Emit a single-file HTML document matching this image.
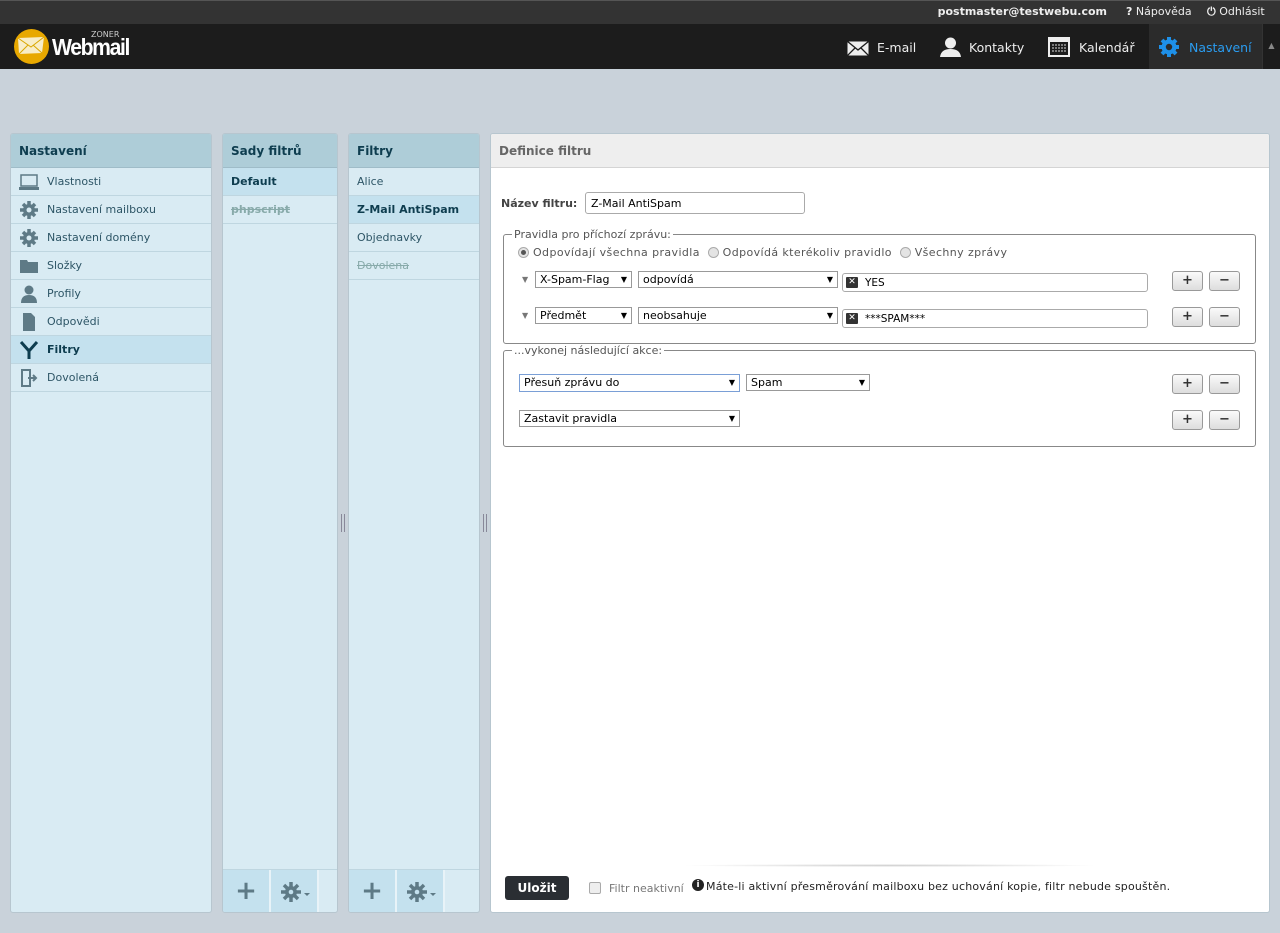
<!DOCTYPE html>
<html><head><meta charset="utf-8"><style>
*{box-sizing:border-box;margin:0;padding:0}
body{width:1280px;height:933px;background:#c9d2da;font-family:"DejaVu Sans","Liberation Sans",sans-serif;font-size:10.5px;color:#333;position:relative;overflow:hidden}
.a{position:absolute}
.top{left:0;top:0;width:1280px;height:24px;background:#333;border-top:1px solid #555}
.nav{left:0;top:24px;width:1280px;height:45px;background:#1c1c1c}
.navt{color:#eee;font-size:12.5px;top:40px}
.panel{background:#d9ebf3;border:1px solid #b7c6cf;border-radius:3px;top:133px;height:780px;overflow:hidden}
.ph{height:34px;background:#aecdd8;color:#0e3d4f;font-weight:bold;font-size:12px;padding:10px 8px;border-bottom:1px solid #9fbcc8}
.row{height:28px;border-bottom:1px solid #bfd6e0;padding:7px 0 0 8px;color:#2d5566;font-size:11px;position:relative}
.row.sel{background:#c4e1ee;font-weight:bold;color:#0e3d4f}
.row .ic{position:absolute;left:8px;top:5px;width:20px;height:18px}
.row.i{padding-left:36px}
.strike{text-decoration:line-through;color:#8aa;}
.foot{position:absolute;left:0;bottom:0;width:100%;height:43px;border-top:1px solid #bfd6e0}
.fb{position:absolute;top:0;height:43px;width:48px;background:#c4e1ee;border-right:2px solid #e8f3f8}
.sel2{border:1px solid #999;background:#fff;height:17px;font-size:11px;color:#000;padding:1px 4px;position:absolute}
.sel2:after{content:"▼";position:absolute;right:4px;top:3px;font-size:8px}
.btn{position:absolute;width:31px;height:20px;border:1px solid #999;border-radius:3px;background:linear-gradient(#fafafa,#ddd);text-align:center;font-weight:bold;font-size:13px;line-height:17px;color:#333}
fieldset{position:absolute;border:1px solid #888;border-radius:3px}
legend{font-size:11px;color:#555;margin-left:8px;padding:0 2px}
.txt{position:absolute;border:1px solid #aaa;border-radius:3px;background:#fff;height:19px;font-size:10.5px;padding:3px 0 0 22px;color:#000}
.xi{position:absolute;left:3px;top:3px;width:12px;height:11px;background:#333;border-radius:1px;color:#fff;font-size:9px;line-height:11px;text-align:center}
.radio{display:inline-block;width:11px;height:11px;border:1px solid #aaa;border-radius:50%;background:#e4e4e4;vertical-align:-2px;margin-right:4px;position:relative}
</style></head><body>
<div class="a top"></div>
<div class="a" style="right:173px;top:5px;color:#eee;font-weight:bold;font-size:11px">postmaster@testwebu.com</div>
<div class="a" style="left:1126px;top:5px;color:#eee;font-size:11px"><b>?</b> Nápověda</div>
<div class="a" style="left:1207px;top:5px;color:#eee;font-size:11px"><b>⏻</b> Odhlásit</div>
<div class="a nav"></div>
<div class="a" style="left:14px;top:29px;width:35px;height:35px;border-radius:50%;background:#e8a800"></div>
<svg class="a" style="left:16px;top:35px" width="32" height="22"><path d="M2 3L28 2L26 18L3 19Z" fill="#f8edc8"/><path d="M2 3L15 12L28 2M3 19L12 10M26 18L17 10" stroke="#d9a700" fill="none"/></svg>
<div class="a" style="left:91px;top:30px;color:#ccc;font-size:8px">ZONER</div>
<div class="a" style="left:52px;top:34px;color:#fff;font-size:23px;font-weight:bold;font-family:'Liberation Sans',sans-serif;letter-spacing:-1.5px;transform:scaleX(0.92);transform-origin:left">Webmail</div>
<svg class="a" style="left:847px;top:41px" width="22" height="15"><rect x="0.5" y="0.5" width="21" height="14" fill="#eee"/><path d="M0 0L11 9L22 0M0 15L8 7M22 15L14 7" stroke="#1c1c1c" fill="none" stroke-width="1.3"/></svg>
<div class="a navt" style="left:877px">E-mail</div>
<svg class="a" style="left:940px;top:36px" width="21" height="22"><circle cx="10.5" cy="7" r="5.5" fill="#eee"/><path d="M0 21Q1 13 10.5 13Q20 13 21 21Z" fill="#eee"/></svg>
<div class="a navt" style="left:969px">Kontakty</div>
<svg class="a" style="left:1048px;top:37px" width="22" height="20"><rect width="22" height="20" fill="#eee"/><rect x="2" y="5" width="18" height="13" fill="#1c1c1c"/><path d="M4 8h14M4 11h14M4 14h14" stroke="#ddd" stroke-dasharray="2 1"/></svg>
<div class="a navt" style="left:1079px">Kalendář</div>
<div class="a" style="left:1149px;top:24px;width:113px;height:45px;background:#2b2b2b"></div>
<div class="a" style="left:1262px;top:24px;width:18px;height:45px;background:#1c1c1c;border-left:1px solid #333;color:#888;font-size:8px;text-align:center;padding-top:17px">▲</div>
<svg class="a" style="left:1158px;top:36px" width="22" height="22" viewBox="0 0 22 22"><g fill="#1e90e8"><circle cx="11" cy="11" r="7.5"/><g stroke="#1e90e8" stroke-width="4"><path d="M11 1v20M1 11h20M4 4l14 14M18 4L4 18"/></g></g><circle cx="11" cy="11" r="3.2" fill="#2b2b2b"/></svg>
<div class="a navt" style="left:1189px;color:#2a9cf0">Nastavení</div>

<div class="a panel" style="left:10px;width:202px">
<div class="ph">Nastavení</div>
<div class="row i"><svg class="ic" viewBox="0 0 20 18"><rect x="2" y="2" width="16" height="11" fill="none" stroke="#5e7a86" stroke-width="1.5"/><rect x="0" y="14" width="20" height="3" fill="#5e7a86"/></svg>Vlastnosti</div>
<div class="row i"><svg class="ic" viewBox="0 0 20 18"><circle cx="10" cy="9" r="6" fill="#5e7a86"/><path d="M10 0v18M1 9h18M4 3l12 12M16 3L4 15" stroke="#5e7a86" stroke-width="3.5"/><circle cx="10" cy="9" r="2.5" fill="#d9ebf3"/></svg>Nastavení mailboxu</div>
<div class="row i"><svg class="ic" viewBox="0 0 20 18"><circle cx="10" cy="9" r="6" fill="#5e7a86"/><path d="M10 0v18M1 9h18M4 3l12 12M16 3L4 15" stroke="#5e7a86" stroke-width="3.5"/><circle cx="10" cy="9" r="2.5" fill="#d9ebf3"/></svg>Nastavení domény</div>
<div class="row i"><svg class="ic" viewBox="0 0 20 18"><path d="M1 3h7l1 2h10v11H1Z" fill="#5e7a86"/></svg>Složky</div>
<div class="row i"><svg class="ic" viewBox="0 0 20 18"><circle cx="10" cy="5" r="4.5" fill="#5e7a86"/><path d="M2 18Q2 10 10 10Q18 10 18 18Z" fill="#5e7a86"/></svg>Profily</div>
<div class="row i"><svg class="ic" viewBox="0 0 20 18"><path d="M4 0h8l4 4v14H4Z" fill="#5e7a86"/></svg>Odpovědi</div>
<div class="row i sel"><svg class="ic" viewBox="0 0 20 18"><path d="M2 1L10 10V18M18 1L10 10" stroke="#0e3d4f" stroke-width="3" fill="none"/></svg>Filtry</div>
<div class="row i"><svg class="ic" viewBox="0 0 20 18"><path d="M3 1h8v16H3Z" fill="none" stroke="#5e7a86" stroke-width="2"/><path d="M9 9h8M14 6l3 3-3 3" stroke="#5e7a86" stroke-width="2" fill="none"/></svg>Dovolená</div>
</div>

<div class="a panel" style="left:222px;width:116px">
<div class="ph">Sady filtrů</div>
<div class="row sel">Default</div>
<div class="row" style="font-weight:bold"><span class="strike">phpscript</span></div>
<div class="foot"><div class="fb" style="left:0;color:#5e7a86;font-size:26px;font-weight:bold;text-align:center;line-height:42px">+</div><div class="fb" style="left:48px"><svg style="position:absolute;left:10px;top:11px" width="30" height="22"><circle cx="10" cy="11" r="6" fill="#5e7a86"/><path d="M10 1v20M0 11h20M3 4l14 14M17 4L3 18" stroke="#5e7a86" stroke-width="3.5"/><circle cx="10" cy="11" r="2.3" fill="#c4e1ee"/><path d="M23 12h6l-3 3z" fill="#5e7a86"/></svg></div></div>
</div>
<div class="a" style="left:341px;top:514px;width:4px;height:18px;border-left:1px solid #889;border-right:1px solid #889"></div>

<div class="a panel" style="left:348px;width:132px">
<div class="ph">Filtry</div>
<div class="row">Alice</div>
<div class="row sel">Z-Mail AntiSpam</div>
<div class="row">Objednavky</div>
<div class="row"><span class="strike">Dovolena</span></div>
<div class="foot"><div class="fb" style="left:0;color:#5e7a86;font-size:26px;font-weight:bold;text-align:center;line-height:42px">+</div><div class="fb" style="left:48px"><svg style="position:absolute;left:10px;top:11px" width="30" height="22"><circle cx="10" cy="11" r="6" fill="#5e7a86"/><path d="M10 1v20M0 11h20M3 4l14 14M17 4L3 18" stroke="#5e7a86" stroke-width="3.5"/><circle cx="10" cy="11" r="2.3" fill="#c4e1ee"/><path d="M23 12h6l-3 3z" fill="#5e7a86"/></svg></div></div>
</div>
<div class="a" style="left:483px;top:514px;width:4px;height:18px;border-left:1px solid #889;border-right:1px solid #889"></div>

<div class="a" style="left:490px;top:133px;width:780px;height:780px;background:#fff;border:1px solid #b7c6cf;border-radius:3px;overflow:hidden">
<div style="height:34px;background:#eee;border-bottom:1px solid #d4d4d4;color:#666;font-weight:bold;font-size:12px;padding:10px 8px">Definice filtru</div>
</div>
<div class="a" style="left:501px;top:197px;font-weight:bold;color:#444;font-size:11px">Název filtru:</div>
<div class="a" style="left:585px;top:192px;width:220px;height:22px;border:1px solid #aaa;border-radius:3px;font-size:11px;color:#000;padding:4px 5px">Z-Mail AntiSpam</div>

<fieldset style="left:503px;top:228px;width:753px;height:116px"><legend>Pravidla pro příchozí zprávu:</legend></fieldset>
<div class="a" style="left:518px;top:246px;font-size:11px;color:#555;white-space:nowrap;letter-spacing:0.4px"><span class="radio"><span style="position:absolute;left:2px;top:2px;width:5px;height:5px;border-radius:50%;background:#555"></span></span>Odpovídají všechna pravidla &nbsp;<span class="radio"></span>Odpovídá kterékoliv pravidlo &nbsp;<span class="radio"></span>Všechny zprávy</div>
<div class="a" style="left:522px;top:275px;font-size:8px;color:#777">▼</div>
<div class="sel2" style="left:535px;top:271px;width:97px">X-Spam-Flag</div>
<div class="sel2" style="left:638px;top:271px;width:200px">odpovídá</div>
<div class="txt" style="left:842px;top:273px;width:306px"><span class="xi">✕</span>YES</div>
<div class="btn" style="left:1172px;top:271px">+</div><div class="btn" style="left:1209px;top:271px">−</div>
<div class="a" style="left:522px;top:311px;font-size:8px;color:#777">▼</div>
<div class="sel2" style="left:535px;top:307px;width:97px">Předmět</div>
<div class="sel2" style="left:638px;top:307px;width:200px">neobsahuje</div>
<div class="txt" style="left:842px;top:309px;width:306px"><span class="xi">✕</span>***SPAM***</div>
<div class="btn" style="left:1172px;top:307px">+</div><div class="btn" style="left:1209px;top:307px">−</div>

<fieldset style="left:503px;top:344px;width:753px;height:103px"><legend>...vykonej následující akce:</legend></fieldset>
<div class="sel2" style="left:519px;top:374px;width:221px;border-color:#7a9fd6;height:18px">Přesuň zprávu do</div>
<div class="sel2" style="left:746px;top:374px;width:124px">Spam</div>
<div class="btn" style="left:1172px;top:374px">+</div><div class="btn" style="left:1209px;top:374px">−</div>
<div class="sel2" style="left:519px;top:410px;width:221px">Zastavit pravidla</div>
<div class="btn" style="left:1172px;top:410px">+</div><div class="btn" style="left:1209px;top:410px">−</div>

<div class="a" style="left:680px;top:864px;width:420px;height:3px;background:radial-gradient(ellipse at center,#ccc,rgba(255,255,255,0) 70%)"></div>
<div class="a" style="left:505px;top:876px;width:64px;height:24px;background:#2a2e33;border-radius:3px;color:#fff;font-weight:bold;font-size:12px;text-align:center;line-height:24px">Uložit</div>
<div class="a" style="left:589px;top:882px;width:12px;height:12px;border:1px solid #aaa;border-radius:2px;background:#eee"></div>
<div class="a" style="left:609px;top:882px;color:#777;font-size:11px;white-space:nowrap">Filtr neaktivní</div>
<div class="a" style="left:692px;top:879px;width:12px;height:12px;border-radius:50%;background:#222;color:#fff;font-size:9px;font-weight:bold;text-align:center;line-height:12px">i</div>
<div class="a" style="left:706px;top:880px;color:#222;font-size:11px;white-space:nowrap;letter-spacing:0.2px">Máte-li aktivní přesměrování mailboxu bez uchování kopie, filtr nebude spouštěn.</div>
</body></html>
